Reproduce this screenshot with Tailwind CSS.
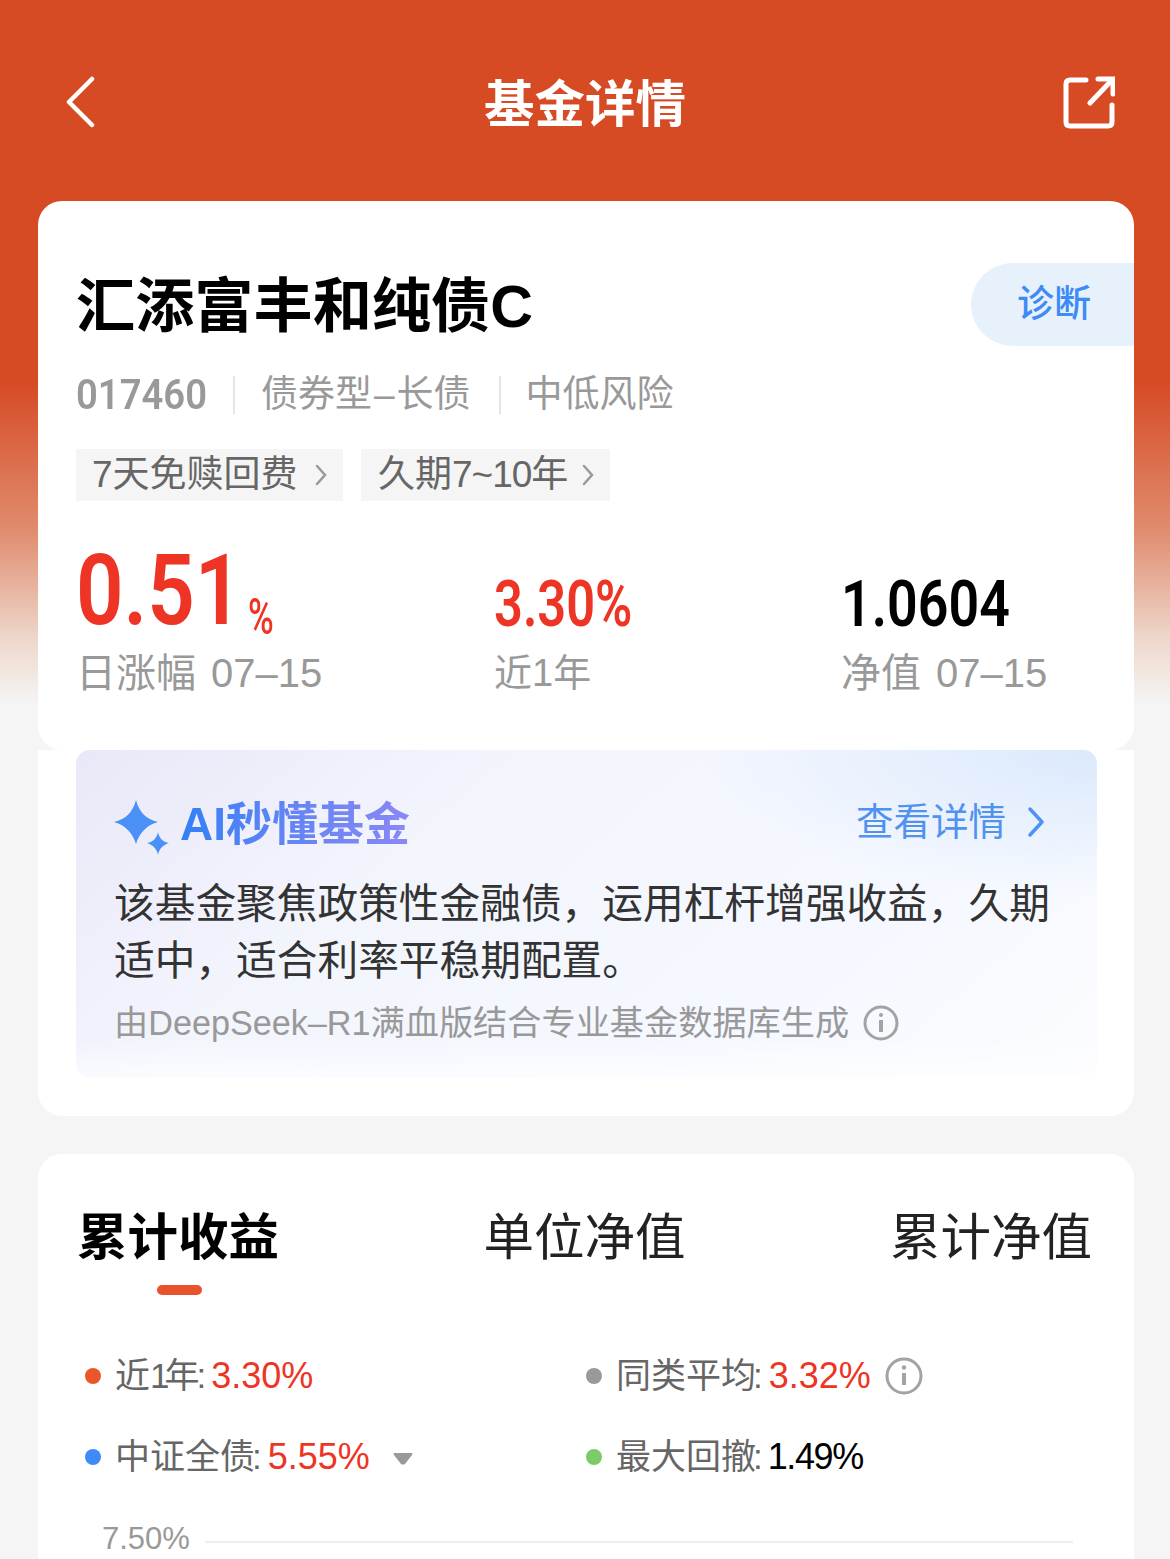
<!DOCTYPE html>
<html lang="zh-CN">
<head>
    <meta charset="UTF-8">
    <meta name="viewport" content="width=device-width, initial-scale=1.0">
    <title>基金详情</title>
    <script src="https://cdn.jsdelivr.net/npm/@tailwindcss/browser@4"></script>
</head>
<body class="bg-[#f5f5f5] font-['Liberation_Sans','Noto_Sans_CJK_SC',sans-serif]">
    <div class="w-[1170px] h-[1559px] overflow-hidden bg-[linear-gradient(180deg,#d64a24_0px,#d64a24_380px,#e08c6e_530px,#eed8cc_640px,#f5f5f5_705px)]">
        <!-- header -->
        <header class="h-[201px] flex items-start justify-between pt-[76px] pl-[66px] pr-[55px] relative">
            <svg class="w-[30px] h-[52px]" viewBox="0 0 30 52" fill="none" stroke="#fff" stroke-width="4.5" stroke-linecap="round" stroke-linejoin="round"><path d="M26 3 L3 26 L26 49"/></svg>
            <h1 class="absolute left-0 right-0 top-[73px] text-center text-[50.5px] leading-[64px] font-bold text-white">基金详情</h1>
            <svg class="w-[52px] h-[53px]" viewBox="0 0 52 53" fill="none" stroke="#fff" stroke-width="5" stroke-linecap="round" stroke-linejoin="round"><path d="M23 4 H7 Q3 4 3 8 V46 Q3 50 7 50 H45 Q49 50 49 46 V29"/><path d="M27 27 L49 4"/><path d="M35 3 H50 V18" stroke-linejoin="miter"/></svg>
        </header>

        <main class="ml-[38px] mr-[36px]">
            <!-- fund summary -->
            <section class="bg-white rounded-[24px] h-[549px] pt-[62px] pl-[38px]">
                <div class="flex items-start justify-between">
                    <h2 class="text-[59.2px] leading-[88px] font-bold text-black">汇添富丰和纯债C</h2>
                    <div class="w-[163px] h-[83px] rounded-l-[42px] bg-[#e6f1fc] flex items-center pl-[46px] text-[37px] font-medium text-[#3e8bf5]">诊断</div>
                </div>
                <div class="flex items-center h-[40px] mt-[24px] text-[37px] text-[#999]">
                    <span class="w-[130px] text-[42px] leading-[36px] font-['Roboto'] font-semibold whitespace-nowrap origin-left scale-x-[.91]">017460</span>
                    <span class="w-[2px] h-[38px] bg-[#e5e5e5] ml-[27px] mr-[26px]"></span>
                    <span>债券型<span class="mx-[2px]">–</span>长债</span>
                    <span class="w-[2px] h-[38px] bg-[#e5e5e5] ml-[28px] mr-[25px]"></span>
                    <span>中低风险</span>
                </div>
                <div class="flex gap-[18px] mt-[34px] text-[37px] text-[#666]">
                    <div class="w-[267px] h-[52px] bg-[#f5f5f5] pl-[16px] flex items-center gap-[16px]">
                        <span>7天免赎回费</span>
                        <svg class="w-[14px] h-[24px]" viewBox="0 0 14 24" fill="none" stroke="#999" stroke-width="2.5" stroke-linecap="round"><path d="M3 3 L11 12 L3 21"/></svg>
                    </div>
                    <div class="w-[249px] h-[52px] bg-[#f5f5f5] pl-[17px] flex items-center gap-[13px]">
                        <span>久期<span class="tracking-[-1px]">7~10</span>年</span>
                        <svg class="w-[14px] h-[24px]" viewBox="0 0 14 24" fill="none" stroke="#999" stroke-width="2.5" stroke-linecap="round"><path d="M3 3 L11 12 L3 21"/></svg>
                    </div>
                </div>
                <div class="flex mt-[44px] text-[40px] leading-[52px] text-[#999]">
                    <div class="w-[418px]">
                        <div class="h-[92px] flex items-end text-[#ee3424] font-['Roboto'] font-semibold">
                            <span class="w-[158px] text-[98px] leading-[92px] whitespace-nowrap origin-left scale-x-[.85]">0.51</span>
                            <span class="w-[24px] ml-[14px] text-[50px] leading-[40px] font-medium origin-left scale-x-[.7]">%</span>
                        </div>
                        <div class="mt-[10px]">日涨幅<span class="ml-[4px]"> 07–15</span></div>
                    </div>
                    <div class="w-[347px]">
                        <div class="h-[92px] flex items-end text-[64px] leading-[64px] text-[#ee3424] font-['Roboto'] font-semibold">
                            <span class="w-[136px] whitespace-nowrap origin-left scale-x-[.79]">3.30%</span>
                        </div>
                        <div class="mt-[10px] text-[38px]">近1年</div>
                    </div>
                    <div>
                        <div class="h-[92px] flex items-end text-[64px] leading-[64px] text-black font-['Roboto'] font-semibold">
                            <span class="w-[165px] whitespace-nowrap origin-left scale-x-[.84]">1.0604</span>
                        </div>
                        <div class="mt-[10px]">净值<span class="ml-[4px]"> 07–15</span></div>
                    </div>
                </div>
            </section>

            <!-- AI summary -->
            <section class="bg-white rounded-b-[24px] h-[366px] pl-[38px] pr-[37px]">
                <div class="h-[328px] rounded-[14px] bg-[linear-gradient(140deg,#e9e8f8_0%,#f3f5fd_32%,#f5f8ff_70%,#fbfcff_100%)] relative overflow-hidden px-[38px] pt-[46px]">
                    <div class="absolute top-0 right-0 w-[400px] h-[150px] bg-[radial-gradient(ellipse_at_top_right,#dbe9fc,transparent_70%)]"></div>
                    <div class="absolute bottom-0 left-0 right-0 h-[40px] bg-gradient-to-t from-white/70 to-transparent"></div>
                    <div class="relative flex items-center justify-between h-[56px]">
                        <div class="flex items-center">
                            <svg class="w-[56px] h-[56px] mr-[10px] mt-[8px]" viewBox="0 0 56 56" fill="#4a90f7"><path d="M22 0 C25 12 32 19 44 22 C32 25 25 34 22 44 C19 34 12 25 0 22 C12 19 19 12 22 0 Z"/><path d="M44 32 C45 38 49 42 55 43 C49 45 45 49 44 55 C43 49 39 45 33 43 C39 42 43 38 44 32 Z"/></svg>
                            <span class="text-[46px] leading-[56px] font-bold bg-gradient-to-r from-[#2f80f5] to-[#8a88f5] bg-clip-text text-transparent">AI秒懂基金</span>
                        </div>
                        <div class="flex items-center text-[37.5px] text-[#4f92f0] pr-[14px] mb-[4px]">
                            <span>查看详情</span>
                            <svg class="w-[18px] h-[32px] ml-[21px]" viewBox="0 0 18 32" fill="none" stroke="#4f92f0" stroke-width="3.5" stroke-linecap="round" stroke-linejoin="round"><path d="M3 3 L15 16 L3 29"/></svg>
                        </div>
                    </div>
                    <p class="relative mt-[24px] text-[40.7px] leading-[57px] text-[#333]">该基金聚焦政策性金融债，运用杠杆增强收益，久期适中，适合利率平稳期配置。</p>
                    <div class="relative flex items-center mt-[11px] text-[34.2px] leading-[44px] text-[#999]">
                        <span>由DeepSeek–R1满血版结合专业基金数据库生成</span>
                        <svg class="w-[36px] h-[36px] ml-[14px]" viewBox="0 0 36 36" fill="none" stroke="#a3a3a3" stroke-width="3"><circle cx="18" cy="18" r="16"/><path d="M18 15 V27" stroke-width="4"/><circle cx="18" cy="10" r="2" fill="#a3a3a3" stroke="none"/></svg>
                    </div>
                </div>
            </section>

            <!-- returns -->
            <section class="bg-white rounded-t-[24px] mt-[38px] h-[500px]">
                <div class="flex justify-between pl-[39px] pr-[42px] pt-[51px] text-[50.5px] leading-[66px] text-[#222]">
                    <div class="relative font-bold text-black">累计收益
                        <div class="absolute left-[80px] top-[80px] w-[45px] h-[10px] rounded-full bg-[#e9532c]"></div>
                    </div>
                    <div>单位净值</div>
                    <div>累计净值</div>
                </div>
                <div class="grid grid-cols-[501px_1fr] gap-y-[35px] pl-[47px] mt-[82px] text-[35px] leading-[46px] text-[#666]">
                    <div class="flex items-center">
                        <span class="w-[16px] h-[16px] rounded-full bg-[#e9562a] mr-[14px]"></span>
                        <span>近<span class="tracking-[-5px]">1</span>年<span class="ml-[-3px]">:</span></span><span class="text-[36px] text-[#ee3424] ml-[5px]">3.30%</span>
                    </div>
                    <div class="flex items-center">
                        <span class="w-[16px] h-[16px] rounded-full bg-[#999] mr-[14px]"></span>
                        <span>同类平均<span class="ml-[-3px]">:</span></span><span class="text-[36px] text-[#ee3424] ml-[6px]">3.32%</span>
                        <svg class="w-[38px] h-[38px] ml-[14px]" viewBox="0 0 38 38" fill="none" stroke="#a3a3a3" stroke-width="3"><circle cx="19" cy="19" r="17"/><path d="M19 16 V28" stroke-width="4"/><circle cx="19" cy="10.5" r="2.2" fill="#a3a3a3" stroke="none"/></svg>
                    </div>
                    <div class="flex items-center">
                        <span class="w-[16px] h-[16px] rounded-full bg-[#3e8bf8] mr-[14px]"></span>
                        <span>中证全债<span class="ml-[-3px]">:</span></span><span class="text-[36px] text-[#ee3424] ml-[6px]">5.55%</span>
                        <svg class="w-[20px] h-[12px] ml-[23px] mt-[4px]" viewBox="0 0 20 12" fill="#999"><path d="M1 0 H19 Q20 0 19 2 L12 11 Q10 12 8 11 L1 2 Q0 0 1 0 Z"/></svg>
                    </div>
                    <div class="flex items-center">
                        <span class="w-[16px] h-[16px] rounded-full bg-[#7bcb6a] mr-[14px]"></span>
                        <span>最大回撤<span class="ml-[-3px]">:</span></span><span class="text-[36px] tracking-[-1.4px] text-black ml-[5px]">1.49%</span>
                    </div>
                </div>
                <div class="flex items-center pl-[64px] pr-[61px] mt-[39px]">
                    <span class="text-[31px] leading-[40px] text-[#999]">7.50%</span>
                    <div class="flex-1 h-[2px] bg-[#eee] ml-[15px] mt-[6px]"></div>
                </div>
            </section>
        </main>
    </div>
</body>
</html>
